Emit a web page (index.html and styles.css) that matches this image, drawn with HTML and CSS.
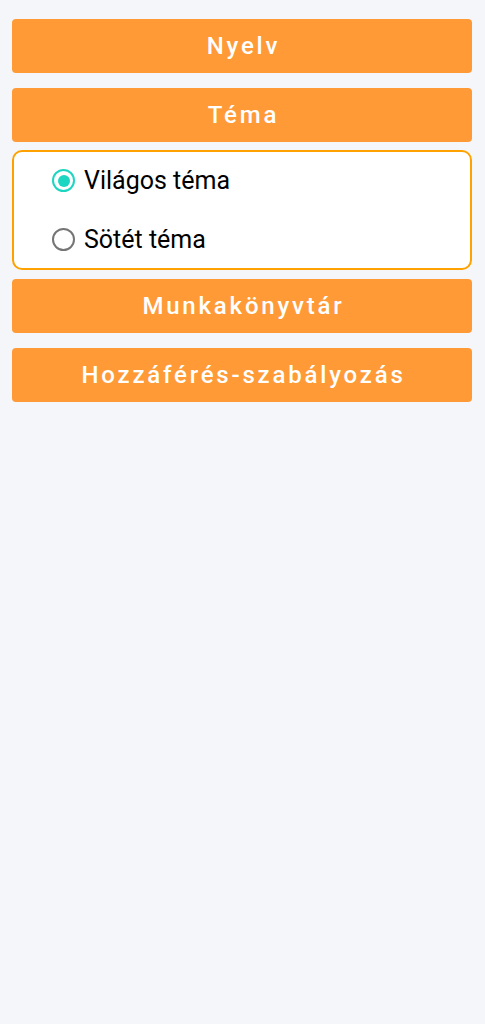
FILE: index.html
```html
<!DOCTYPE html>
<html lang="hu">
<head>
    <meta charset="UTF-8">
    <meta name="viewport" content="width=device-width, initial-scale=1.0">
    <title>Beállítások</title>
    <link rel="stylesheet" href="styles.css">
</head>
<body>
    <div class="settings">
        <button class="section-btn">Nyelv</button>
        <button class="section-btn">Téma</button>
        <div class="theme-card">
            <label class="radio-row">
                <input type="radio" name="theme" checked>
                <span class="radio-mark"></span>
                <span class="radio-text">Világos téma</span>
            </label>
            <label class="radio-row">
                <input type="radio" name="theme">
                <span class="radio-mark"></span>
                <span class="radio-text">Sötét téma</span>
            </label>
        </div>
        <button class="section-btn">Munkakönyvtár</button>
        <button class="section-btn">Hozzáférés-szabályozás</button>
    </div>
</body>
</html>
```

FILE: styles.css
```css
body {
    margin: 0;
    background-color: #f5f6fa;
    font-family: Roboto, "Liberation Sans", sans-serif;
}
.settings {
    display: flex;
    flex-direction: column;
    padding: 19px 13px 0 12px;
}
.section-btn {
    height: 54px;
    margin-bottom: 15px;
    padding: 0 0 0 3px;
    background-color: #ff9a36;
    color: #fff;
    border: none;
    border-radius: 4px;
    font-family: Roboto, "Liberation Sans", sans-serif;
    font-size: 24px;
    font-weight: 500;
    letter-spacing: 2.8px;
    cursor: pointer;
}
.theme-card {
    margin: -7px 0 9px;
    border: 2px solid #ffa200;
    border-radius: 10px;
    background-color: #fff;
    height: 116px;
    display: flex;
    flex-direction: column;
}
.radio-row {
    display: flex;
    align-items: center;
    height: 58px;
    padding-left: 38px;
    cursor: pointer;
}
.radio-row:first-child {
    height: 60px;
    align-items: flex-start;
    padding-top: 17px;
    box-sizing: border-box;
}
.radio-row input {
    display: none;
}
.radio-mark {
    width: 19px;
    height: 19px;
    border: 2.5px solid #757575;
    border-radius: 50%;
    position: relative;
    flex-shrink: 0;
}
.radio-row input:checked + .radio-mark {
    border-color: #1dd6c2;
}
.radio-row input:checked + .radio-mark::after {
    content: "";
    position: absolute;
    left: 3.5px;
    top: 3.5px;
    width: 12px;
    height: 12px;
    border-radius: 50%;
    background-color: #1dd6c2;
}
.radio-text {
    margin-left: 9px;
    font-size: 25px;
    color: #000;
    line-height: 26px;
}
.radio-row:first-child .radio-text {
    margin-top: -1px;
}
```
